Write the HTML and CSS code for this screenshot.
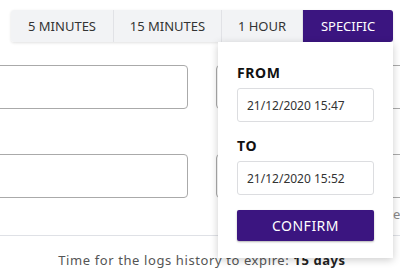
FILE: index.html
```html
<!DOCTYPE html>
<html lang="en">
<head>
    <meta charset="UTF-8">
    <meta name="viewport" content="width=device-width, initial-scale=1.0">
    <title>Logs history</title>
    <link rel="stylesheet" href="styles.css">
</head>
<body>
    <div class="page">
        <!-- Time range tabs -->
        <div class="tabs">
            <button class="tab tab-5m">5 MINUTES</button>
            <button class="tab tab-15m">15 MINUTES</button>
            <button class="tab tab-1h">1 HOUR</button>
            <button class="tab tab-specific active">SPECIFIC</button>
        </div>

        <!-- Fields behind the popup -->
        <div class="fields">
            <div class="field"></div>
            <div class="field"></div>
            <div class="field"></div>
            <div class="field"><span class="field-hint">e</span></div>
        </div>

        <div class="divider"></div>

        <p class="expire">Time for the logs history to expire: <b>15 days</b></p>

        <!-- Specific range popup -->
        <div class="popup">
            <div class="popup-label">FROM</div>
            <input class="popup-input" type="text" value="21/12/2020 15:47">
            <div class="popup-label">TO</div>
            <input class="popup-input" type="text" value="21/12/2020 15:52">
            <button class="confirm">CONFIRM</button>
        </div>
    </div>
</body>
</html>
```
FILE: styles.css
```css
body {
    margin: 0;
    overflow: hidden;
    font-family: "Noto Sans", "DejaVu Sans", sans-serif;
    color: #333;
    background: #fff;
}
.page {
    position: relative;
    width: 400px;
    height: 280px;
    overflow: hidden;
}
/* Tabs */
.tabs {
    display: flex;
    margin: 10px 0 0 11px;
    width: 382px;
    height: 32px;
    box-shadow: 0 1px 3px rgba(0, 0, 0, 0.12);
    border-radius: 3px;
}
.tab {
    height: 32px;
    border: none;
    border-right: 1px solid #e1e2e6;
    background-color: #f2f3f5;
    color: #333;
    font-family: inherit;
    font-size: 13px;
    padding: 0;
    cursor: pointer;
}
.tab-5m { width: 103px; border-radius: 3px 0 0 3px; }
.tab-15m { width: 108px; }
.tab-1h { width: 81px; }
.tab-specific { width: 90px; border-right: none; border-radius: 0 3px 3px 0; }
.tab.active {
    background-color: #3b1580;
    color: #fff;
}
/* Fields */
.fields {
    display: grid;
    grid-template-columns: 200px 200px;
    grid-auto-rows: 44px;
    column-gap: 28px;
    row-gap: 45px;
    margin: 23px 0 0 -12px;
}
.field {
    position: relative;
    border: 1px solid #aaa;
    border-radius: 4px;
}
.field-hint {
    position: absolute;
    left: 176px;
    top: 50px;
    font-size: 13px;
    color: #888;
}
.divider {
    margin-top: 37px;
    height: 1px;
    background-color: #dfe1e6;
}
.expire {
    margin: 15px 0 0;
    text-align: center;
    padding-left: 4px;
    font-size: 13px;
    color: #555;
    letter-spacing: 0.6px;
}
.expire b {
    color: #222;
}
/* Popup */
.popup {
    position: absolute;
    left: 218px;
    top: 42px;
    width: 175px;
    height: 216px;
    box-sizing: border-box;
    padding: 22px 19px 0 19px;
    background-color: #fff;
    box-shadow: 0 2px 8px rgba(0, 0, 0, 0.2);
    display: flex;
    flex-direction: column;
    align-items: flex-start;
}
.popup-label {
    font-size: 14px;
    font-weight: bold;
    color: #111;
    letter-spacing: 0.6px;
    line-height: 17px;
}
.popup-input {
    margin-top: 7px;
    margin-bottom: 15px;
    width: 137px;
    height: 34px;
    box-sizing: border-box;
    border: 1px solid #dcdde0;
    border-radius: 3px;
    padding: 0 9px;
    font-family: inherit;
    font-size: 12px;
    color: #333;
}
.confirm {
    width: 137px;
    height: 31px;
    border: none;
    border-radius: 2px;
    background-color: #3b1580;
    color: #fff;
    font-family: inherit;
    font-size: 14px;
    letter-spacing: 0.5px;
    box-shadow: 0 1px 2px rgba(0, 0, 0, 0.3);
    cursor: pointer;
}
```
